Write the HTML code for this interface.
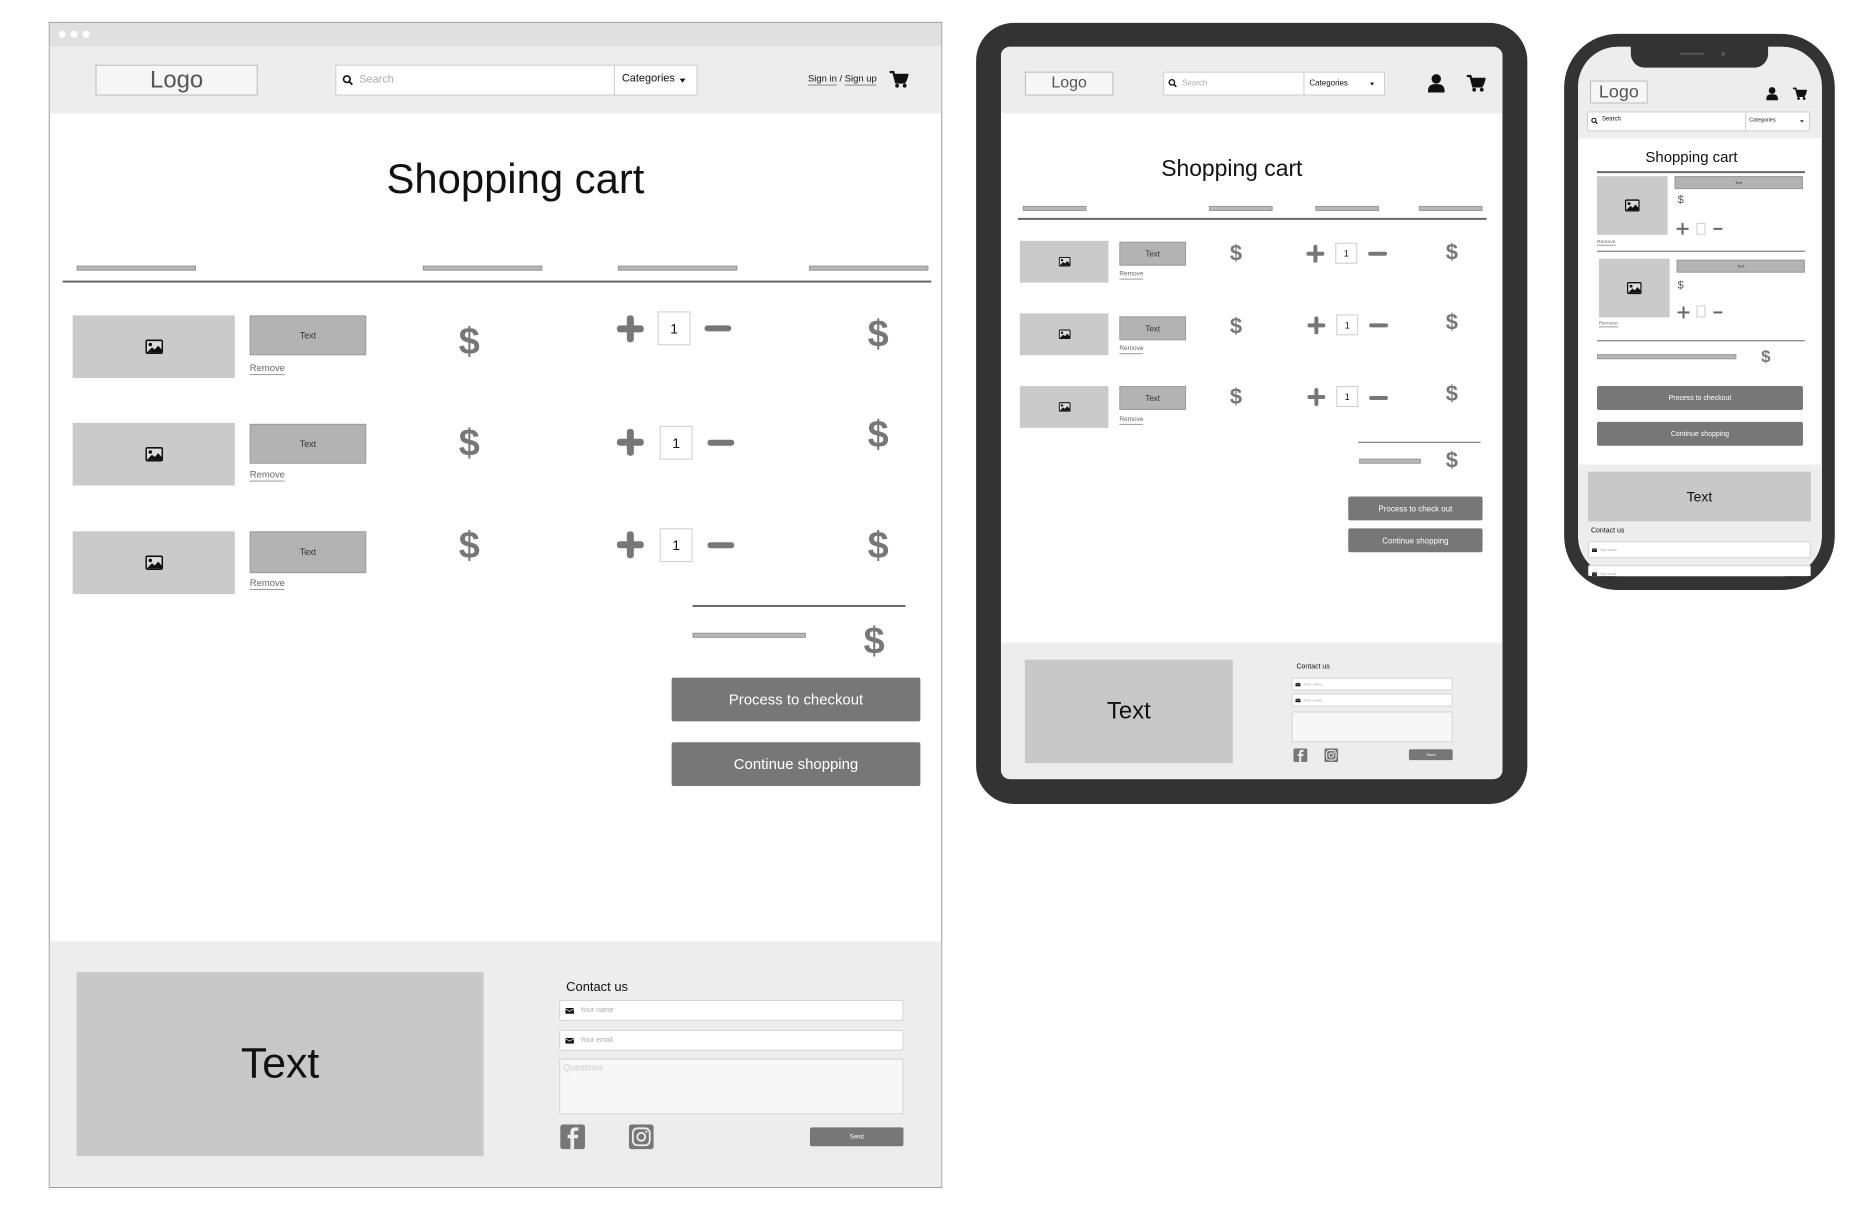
<!DOCTYPE html>
<html><head><meta charset="utf-8">
<style>
*{margin:0;padding:0;box-sizing:border-box}
body{width:1853px;height:1220px;background:#fff;position:relative;overflow:hidden;font-family:"Liberation Sans",Arial,sans-serif;color:#222}
#w{position:absolute;left:0;top:0;width:1853px;height:1220px;transform:scale(0.995);transform-origin:0 0}
.a{position:absolute}
.img{position:absolute;background:#cacaca;display:flex;align-items:center;justify-content:center}
.tb{position:absolute;background:#b3b3b3;border:1px solid #9a9a9a;display:flex;align-items:center;justify-content:center;color:#333}
.rm{position:absolute;color:#666;border-bottom:1px solid #999;line-height:1.2}
.dl{position:absolute;color:#777;font-weight:bold;line-height:1}
.bar{position:absolute;background:#b8b8b8;border:1px solid #999}
.hl{position:absolute;background:#666;height:1px}
.btn{position:absolute;background:#777;color:#fff;display:flex;align-items:center;justify-content:center;border-radius:2px}
.box{position:absolute;background:#fff;border:1px solid #ccc;display:flex;align-items:center;justify-content:center;color:#111}
.pl{position:absolute;background:#777;border-radius:3px}
.in{position:absolute;background:#fff;border:1px solid #d4d4d4;border-radius:2px;color:#aaa;display:flex;align-items:center}
</style></head><body>
<svg width="0" height="0" style="position:absolute"><defs>
<symbol id="pic" viewBox="0 0 16 13"><rect x="0" y="0" width="16" height="13" rx="2" fill="#111"/><rect x="1.5" y="1.5" width="13" height="10" fill="#ddd"/><circle cx="4.5" cy="4.5" r="1.6" fill="#111"/><path d="M1.5 11.5 L6 7 L8.5 9 L11.5 5.5 L14.5 9 L14.5 11.5Z" fill="#111"/></symbol>
<symbol id="cart" viewBox="0 0 20 18"><path d="M0 1 H4 L7 12 H17 M5 4 H19 L17 10 H7" fill="none" stroke="#111" stroke-width="2.4"/><path d="M5 4 H19 L17 10 H7Z" fill="#111"/><circle cx="8" cy="15.5" r="2" fill="#111"/><circle cx="16" cy="15.5" r="2" fill="#111"/></symbol>
<symbol id="user" viewBox="0 0 16 18"><circle cx="8" cy="5" r="4.5" fill="#111"/><path d="M0 18 C0 11 3 10 8 10 C13 10 16 11 16 18Z" fill="#111"/></symbol>
<symbol id="mag" viewBox="0 0 12 12"><circle cx="5" cy="5" r="3.6" fill="none" stroke="#111" stroke-width="1.8"/><path d="M7.5 7.5 L11 11" stroke="#111" stroke-width="2"/></symbol>
<symbol id="env" viewBox="0 0 10 7"><rect width="10" height="7" fill="#111"/><path d="M0 1 L5 4 L10 1" stroke="#fff" stroke-width=".8" fill="none"/></symbol>
<symbol id="fb" viewBox="0 0 25 25"><rect width="25" height="25" rx="3" fill="#777"/><path d="M14 25 V14 H18 V10.5 H14 V8 C14 6.8 14.6 6.3 16 6.3 H18.3 V3 H15 C11.8 3 10.3 4.8 10.3 7.8 V10.5 H7.5 V14 H10.3 V25Z" fill="#eee"/></symbol>
<symbol id="ig" viewBox="0 0 25 25"><rect width="25" height="25" rx="3" fill="#777"/><rect x="4" y="4" width="17" height="17" rx="4.5" fill="none" stroke="#eee" stroke-width="1.8"/><circle cx="12.5" cy="12.5" r="4" fill="none" stroke="#eee" stroke-width="1.8"/><circle cx="17.6" cy="7.4" r="1.1" fill="#eee"/></symbol>
</defs></svg>
<div id="w">
<!-- ================= DESKTOP ================= -->
<div class="a" style="left:49px;top:22px;width:898px;height:1172px;border:1px solid #999;background:#fff"></div>
<div class="a" style="left:50px;top:23px;width:896px;height:24px;background:#e0e0e0"></div>
<div class="a" style="left:59px;top:31px;width:7px;height:7px;border-radius:50%;background:#fff"></div>
<div class="a" style="left:71px;top:31px;width:7px;height:7px;border-radius:50%;background:#fff"></div>
<div class="a" style="left:83px;top:31px;width:7px;height:7px;border-radius:50%;background:#fff"></div>
<div class="a" style="left:50px;top:47px;width:896px;height:67px;background:#ededed"></div>
<div class="a" style="left:96px;top:65px;width:163px;height:31px;border:1px solid #bbb;background:#f6f6f6;font-size:24px;color:#555;text-align:center;line-height:29px">Logo</div>
<div class="a" style="left:337px;top:65px;width:364px;height:31px;border:1px solid #ccc;background:#fff"></div>
<svg class="a" style="left:344px;top:75px" width="11" height="11"><use href="#mag"/></svg>
<div class="a" style="left:361px;top:74px;font-size:11px;color:#aaa">Search</div>
<div class="a" style="left:617px;top:65px;width:1px;height:31px;background:#ccc"></div>
<div class="a" style="left:625px;top:73px;font-size:11px;color:#111">Categories</div>
<div class="a" style="left:683px;top:79px;border-left:3px solid transparent;border-right:3px solid transparent;border-top:4px solid #111"></div>
<div class="a" style="left:812px;top:74px;font-size:9.5px;color:#111"><span style="border-bottom:1px solid #888">Sign in</span> / <span style="border-bottom:1px solid #888">Sign up</span></div>
<svg class="a" style="left:894px;top:71px" width="19" height="18"><use href="#cart"/></svg>

<div class="a" style="left:0;width:1036px;top:156px;font-size:42px;color:#111;text-align:center">Shopping cart</div>

<div class="bar" style="left:77px;top:267px;width:120px;height:5px"></div>
<div class="bar" style="left:425px;top:267px;width:120px;height:5px"></div>
<div class="bar" style="left:621px;top:267px;width:120px;height:5px"></div>
<div class="bar" style="left:813px;top:267px;width:120px;height:5px"></div>
<div class="hl" style="left:63px;top:282px;width:873px;height:2px"></div>

<div class="img" style="left:73px;top:317px;width:163px;height:63px"><svg width="18" height="15"><use href="#pic"/></svg></div>
<div class="tb" style="left:251px;top:317px;width:117px;height:40px;font-size:9px">Text</div>
<div class="rm" style="left:251px;top:365px;font-size:9.5px">Remove</div>
<div class="dl" style="left:461px;top:325px;font-size:38px">$</div>
<div class="pl" style="left:620px;top:327px;width:27px;height:7px"></div><div class="pl" style="left:630px;top:317px;width:7px;height:27px"></div>
<div class="box" style="left:661px;top:313px;width:33px;height:34px;font-size:14px">1</div>
<div class="pl" style="left:708px;top:327px;width:27px;height:6px"></div>
<div class="dl" style="left:872px;top:317px;font-size:38px">$</div>

<div class="img" style="left:73px;top:425px;width:163px;height:63px"><svg width="18" height="15"><use href="#pic"/></svg></div>
<div class="tb" style="left:251px;top:426px;width:117px;height:40px;font-size:9px">Text</div>
<div class="rm" style="left:251px;top:472px;font-size:9.5px">Remove</div>
<div class="dl" style="left:461px;top:427px;font-size:38px">$</div>
<div class="pl" style="left:620px;top:441px;width:27px;height:7px"></div><div class="pl" style="left:630px;top:431px;width:7px;height:27px"></div>
<div class="box" style="left:663px;top:428px;width:33px;height:34px;font-size:14px">1</div>
<div class="pl" style="left:711px;top:442px;width:27px;height:6px"></div>
<div class="dl" style="left:872px;top:418px;font-size:38px">$</div>

<div class="img" style="left:73px;top:534px;width:163px;height:63px"><svg width="18" height="15"><use href="#pic"/></svg></div>
<div class="tb" style="left:251px;top:534px;width:117px;height:42px;font-size:9px">Text</div>
<div class="rm" style="left:251px;top:581px;font-size:9.5px">Remove</div>
<div class="dl" style="left:461px;top:530px;font-size:38px">$</div>
<div class="pl" style="left:620px;top:544px;width:27px;height:7px"></div><div class="pl" style="left:630px;top:534px;width:7px;height:27px"></div>
<div class="box" style="left:663px;top:531px;width:33px;height:34px;font-size:14px">1</div>
<div class="pl" style="left:711px;top:545px;width:27px;height:6px"></div>
<div class="dl" style="left:872px;top:530px;font-size:38px">$</div>

<div class="hl" style="left:696px;top:608px;width:214px;height:2px"></div>
<div class="bar" style="left:696px;top:636px;width:114px;height:5px"></div>
<div class="dl" style="left:868px;top:626px;font-size:38px">$</div>
<div class="btn" style="left:675px;top:681px;width:250px;height:44px;font-size:15px">Process to checkout</div>
<div class="btn" style="left:675px;top:746px;width:250px;height:44px;font-size:15px">Continue shopping</div>

<div class="a" style="left:50px;top:946px;width:896px;height:247px;background:#ededed"></div>
<div class="a" style="left:77px;top:977px;width:409px;height:185px;background:#c8c8c8;display:flex;align-items:center;justify-content:center;font-size:43px;color:#111">Text</div>
<div class="a" style="left:569px;top:984px;font-size:13px;color:#111">Contact us</div>
<div class="in" style="left:562px;top:1005px;width:346px;height:21px;font-size:7px"><svg style="margin:0 6px 0 5px" width="9" height="6"><use href="#env"/></svg>Your name</div>
<div class="in" style="left:562px;top:1035px;width:346px;height:21px;font-size:7px"><svg style="margin:0 6px 0 5px" width="9" height="6"><use href="#env"/></svg>Your email</div>
<div class="a" style="left:562px;top:1064px;width:346px;height:56px;background:#f7f7f7;border:1px solid #d4d4d4;font-size:9px;color:#ccc;padding:3px 3px">Questions</div>
<svg class="a" style="left:563px;top:1130px" width="25" height="25"><use href="#fb"/></svg>
<svg class="a" style="left:632px;top:1130px" width="25" height="25"><use href="#ig"/></svg>
<div class="btn" style="left:814px;top:1133px;width:94px;height:19px;font-size:6px">Send</div>

<!-- ================= TABLET ================= -->
<div class="a" style="left:981px;top:23px;width:554px;height:785px;background:#333;border-radius:38px"></div>
<div class="a" style="left:1006px;top:47px;width:504px;height:736px;background:#fff;border-radius:9px;overflow:hidden">
  <div class="a" style="left:0;top:0;width:504px;height:67px;background:#ededed"></div>
</div>
<div class="a" style="left:1030px;top:72px;width:89px;height:24px;border:1px solid #bbb;background:#f6f6f6;font-size:16px;color:#555;text-align:center;line-height:22px">Logo</div>
<div class="a" style="left:1169px;top:72px;width:223px;height:24px;border:1px solid #ccc;background:#fff"></div>
<svg class="a" style="left:1174px;top:79px" width="9" height="9"><use href="#mag"/></svg>
<div class="a" style="left:1188px;top:79px;font-size:8px;color:#aaa">Search</div>
<div class="a" style="left:1310px;top:72px;width:1px;height:24px;background:#ccc"></div>
<div class="a" style="left:1316px;top:79px;font-size:8px;color:#111">Categories</div>
<div class="a" style="left:1377px;top:83px;border-left:2.5px solid transparent;border-right:2.5px solid transparent;border-top:3px solid #111"></div>
<svg class="a" style="left:1435px;top:74px" width="17" height="19"><use href="#user"/></svg>
<svg class="a" style="left:1474px;top:75px" width="19" height="18"><use href="#cart"/></svg>

<div class="a" style="left:1006px;width:464px;top:156px;font-size:23px;color:#111;text-align:center">Shopping cart</div>
<div class="bar" style="left:1028px;top:207px;width:64px;height:5px"></div>
<div class="bar" style="left:1215px;top:207px;width:64px;height:5px"></div>
<div class="bar" style="left:1322px;top:207px;width:64px;height:5px"></div>
<div class="bar" style="left:1426px;top:207px;width:64px;height:5px"></div>
<div class="hl" style="left:1023px;top:219px;width:471px;height:2px"></div>

<div class="img" style="left:1025px;top:242px;width:89px;height:42px"><svg width="12" height="10"><use href="#pic"/></svg></div>
<div class="tb" style="left:1125px;top:243px;width:67px;height:24px;font-size:8px">Text</div>
<div class="rm" style="left:1125px;top:272px;font-size:6.5px">Remove</div>
<div class="dl" style="left:1236px;top:244px;font-size:22px">$</div>
<div class="pl" style="left:1313px;top:253px;width:18px;height:4px"></div><div class="pl" style="left:1320px;top:246px;width:4px;height:18px"></div>
<div class="box" style="left:1342px;top:244px;width:22px;height:21px;font-size:9px">1</div>
<div class="pl" style="left:1375px;top:253px;width:19px;height:4px"></div>
<div class="dl" style="left:1453px;top:243px;font-size:22px">$</div>

<div class="img" style="left:1025px;top:315px;width:89px;height:42px"><svg width="12" height="10"><use href="#pic"/></svg></div>
<div class="tb" style="left:1125px;top:318px;width:67px;height:24px;font-size:8px">Text</div>
<div class="rm" style="left:1125px;top:347px;font-size:6.5px">Remove</div>
<div class="dl" style="left:1236px;top:317px;font-size:22px">$</div>
<div class="pl" style="left:1314px;top:325px;width:18px;height:4px"></div><div class="pl" style="left:1321px;top:318px;width:4px;height:18px"></div>
<div class="box" style="left:1343px;top:316px;width:22px;height:21px;font-size:9px">1</div>
<div class="pl" style="left:1376px;top:325px;width:19px;height:4px"></div>
<div class="dl" style="left:1453px;top:313px;font-size:22px">$</div>

<div class="img" style="left:1025px;top:388px;width:89px;height:42px"><svg width="12" height="10"><use href="#pic"/></svg></div>
<div class="tb" style="left:1125px;top:388px;width:67px;height:24px;font-size:8px">Text</div>
<div class="rm" style="left:1125px;top:418px;font-size:6.5px">Remove</div>
<div class="dl" style="left:1236px;top:388px;font-size:22px">$</div>
<div class="pl" style="left:1314px;top:397px;width:18px;height:4px"></div><div class="pl" style="left:1321px;top:390px;width:4px;height:18px"></div>
<div class="box" style="left:1343px;top:388px;width:22px;height:21px;font-size:9px">1</div>
<div class="pl" style="left:1376px;top:398px;width:19px;height:4px"></div>
<div class="dl" style="left:1453px;top:385px;font-size:22px">$</div>

<div class="hl" style="left:1365px;top:444px;width:123px;height:1px"></div>
<div class="bar" style="left:1366px;top:461px;width:62px;height:5px"></div>
<div class="dl" style="left:1453px;top:452px;font-size:22px">$</div>
<div class="btn" style="left:1355px;top:499px;width:135px;height:24px;font-size:8px">Process to check out</div>
<div class="btn" style="left:1355px;top:531px;width:135px;height:24px;font-size:8px">Continue shopping</div>

<div class="a" style="left:1006px;top:646px;width:504px;height:137px;background:#ededed;border-radius:0 0 9px 9px"></div>
<div class="a" style="left:1030px;top:663px;width:209px;height:104px;background:#c8c8c8;display:flex;align-items:center;justify-content:center;font-size:24px;color:#111">Text</div>
<div class="a" style="left:1303px;top:667px;font-size:7px;color:#111">Contact us</div>
<div class="in" style="left:1298px;top:681px;width:162px;height:13px;font-size:4px"><svg style="margin:0 3px 0 3px" width="5" height="4"><use href="#env"/></svg>Your name</div>
<div class="in" style="left:1298px;top:697px;width:162px;height:13px;font-size:4px"><svg style="margin:0 3px 0 3px" width="5" height="4"><use href="#env"/></svg>Your email</div>
<div class="a" style="left:1298px;top:715px;width:162px;height:31px;background:#f7f7f7;border:1px solid #d4d4d4"></div>
<svg class="a" style="left:1300px;top:752px" width="14" height="14"><use href="#fb"/></svg>
<svg class="a" style="left:1331px;top:752px" width="14" height="14"><use href="#ig"/></svg>
<div class="btn" style="left:1416px;top:753px;width:44px;height:11px;font-size:4px">Send</div>

<!-- ================= PHONE ================= -->
<div class="a" style="left:1572px;top:34px;width:272px;height:559px;background:#333;border-radius:54px"></div>
<div class="a" style="left:1586px;top:47px;width:245px;height:532px;background:#fff;border-radius:40px;overflow:hidden">
  <div class="a" style="left:0;top:0;width:245px;height:92px;background:#ededed"></div>
  <div class="a" style="left:0;top:420px;width:245px;height:120px;background:#ededed"></div>
</div>
<div class="a" style="left:1639px;top:46px;width:138px;height:22px;background:#333;border-radius:0 0 14px 14px"></div>
<div class="a" style="left:1688px;top:53px;width:25px;height:2px;background:#555"></div>
<div class="a" style="left:1730px;top:52px;width:4px;height:4px;border-radius:50%;background:#555"></div>

<div class="a" style="left:1598px;top:81px;width:58px;height:23px;border:1px solid #bbb;background:#f6f6f6;font-size:18px;color:#555;text-align:center;line-height:21px">Logo</div>
<svg class="a" style="left:1775px;top:87px" width="12" height="14"><use href="#user"/></svg>
<svg class="a" style="left:1802px;top:88px" width="14" height="13"><use href="#cart"/></svg>
<div class="a" style="left:1595px;top:112px;width:224px;height:20px;border:1px solid #ccc;background:#fff"></div>
<svg class="a" style="left:1599px;top:118px" width="7" height="7"><use href="#mag"/></svg>
<div class="a" style="left:1610px;top:117px;font-size:6px;color:#111">Search</div>
<div class="a" style="left:1754px;top:112px;width:1px;height:20px;background:#ccc"></div>
<div class="a" style="left:1758px;top:118px;font-size:5.5px;color:#111">Categories</div>
<div class="a" style="left:1809px;top:121px;border-left:2px solid transparent;border-right:2px solid transparent;border-top:2.5px solid #111"></div>

<div class="a" style="left:1600px;width:200px;top:150px;font-size:15px;color:#111;text-align:center">Shopping cart</div>
<div class="hl" style="left:1605px;top:172px;width:209px;height:2px"></div>

<div class="img" style="left:1605px;top:177px;width:71px;height:59px"><svg width="15" height="13"><use href="#pic"/></svg></div>
<div class="tb" style="left:1683px;top:177px;width:129px;height:13px;font-size:4px">Text</div>
<div class="dl" style="left:1686px;top:196px;font-size:11px;font-weight:normal;color:#555">$</div>
<div class="a" style="left:1685px;top:229px;width:12px;height:2px;background:#666"></div><div class="a" style="left:1690px;top:224px;width:2px;height:12px;background:#666"></div>
<div class="a" style="left:1705px;top:224px;width:9px;height:12px;border:1px solid #ccc;background:#fff"></div>
<div class="a" style="left:1722px;top:229px;width:9px;height:2px;background:#666"></div>
<div class="rm" style="left:1605px;top:240px;font-size:5px">Remove</div>
<div class="hl" style="left:1605px;top:252px;width:209px;height:1px"></div>

<div class="img" style="left:1607px;top:260px;width:71px;height:59px"><svg width="15" height="13"><use href="#pic"/></svg></div>
<div class="tb" style="left:1685px;top:261px;width:129px;height:13px;font-size:4px">Text</div>
<div class="dl" style="left:1686px;top:282px;font-size:11px;font-weight:normal;color:#555">$</div>
<div class="a" style="left:1686px;top:313px;width:12px;height:2px;background:#666"></div><div class="a" style="left:1691px;top:308px;width:2px;height:12px;background:#666"></div>
<div class="a" style="left:1705px;top:307px;width:9px;height:12px;border:1px solid #ccc;background:#fff"></div>
<div class="a" style="left:1722px;top:313px;width:9px;height:2px;background:#666"></div>
<div class="rm" style="left:1607px;top:322px;font-size:5px">Remove</div>
<div class="hl" style="left:1605px;top:342px;width:209px;height:1px"></div>

<div class="bar" style="left:1605px;top:356px;width:140px;height:5px"></div>
<div class="dl" style="left:1770px;top:350px;font-size:17px">$</div>
<div class="btn" style="left:1605px;top:388px;width:207px;height:24px;font-size:7px">Process to checkout</div>
<div class="btn" style="left:1605px;top:424px;width:207px;height:24px;font-size:7px">Continue shopping</div>

<div class="a" style="left:1596px;top:474px;width:224px;height:50px;background:#c8c8c8;display:flex;align-items:center;justify-content:center;font-size:14px;color:#111">Text</div>
<div class="a" style="left:1599px;top:530px;font-size:7px;color:#111">Contact us</div>
<div class="in" style="left:1596px;top:544px;width:224px;height:17px;font-size:3.5px"><svg style="margin:0 3px 0 3px" width="5" height="4"><use href="#env"/></svg>Your name</div>
<div class="a" style="left:1586px;top:565px;width:245px;height:14px;overflow:hidden;border-radius:0 0 40px 40px">
  <div class="in" style="left:10px;top:3px;width:224px;height:17px;font-size:3.5px"><svg style="margin:0 3px 0 3px" width="5" height="4"><use href="#env"/></svg>Your email</div>
</div>
</div>
</body></html>
